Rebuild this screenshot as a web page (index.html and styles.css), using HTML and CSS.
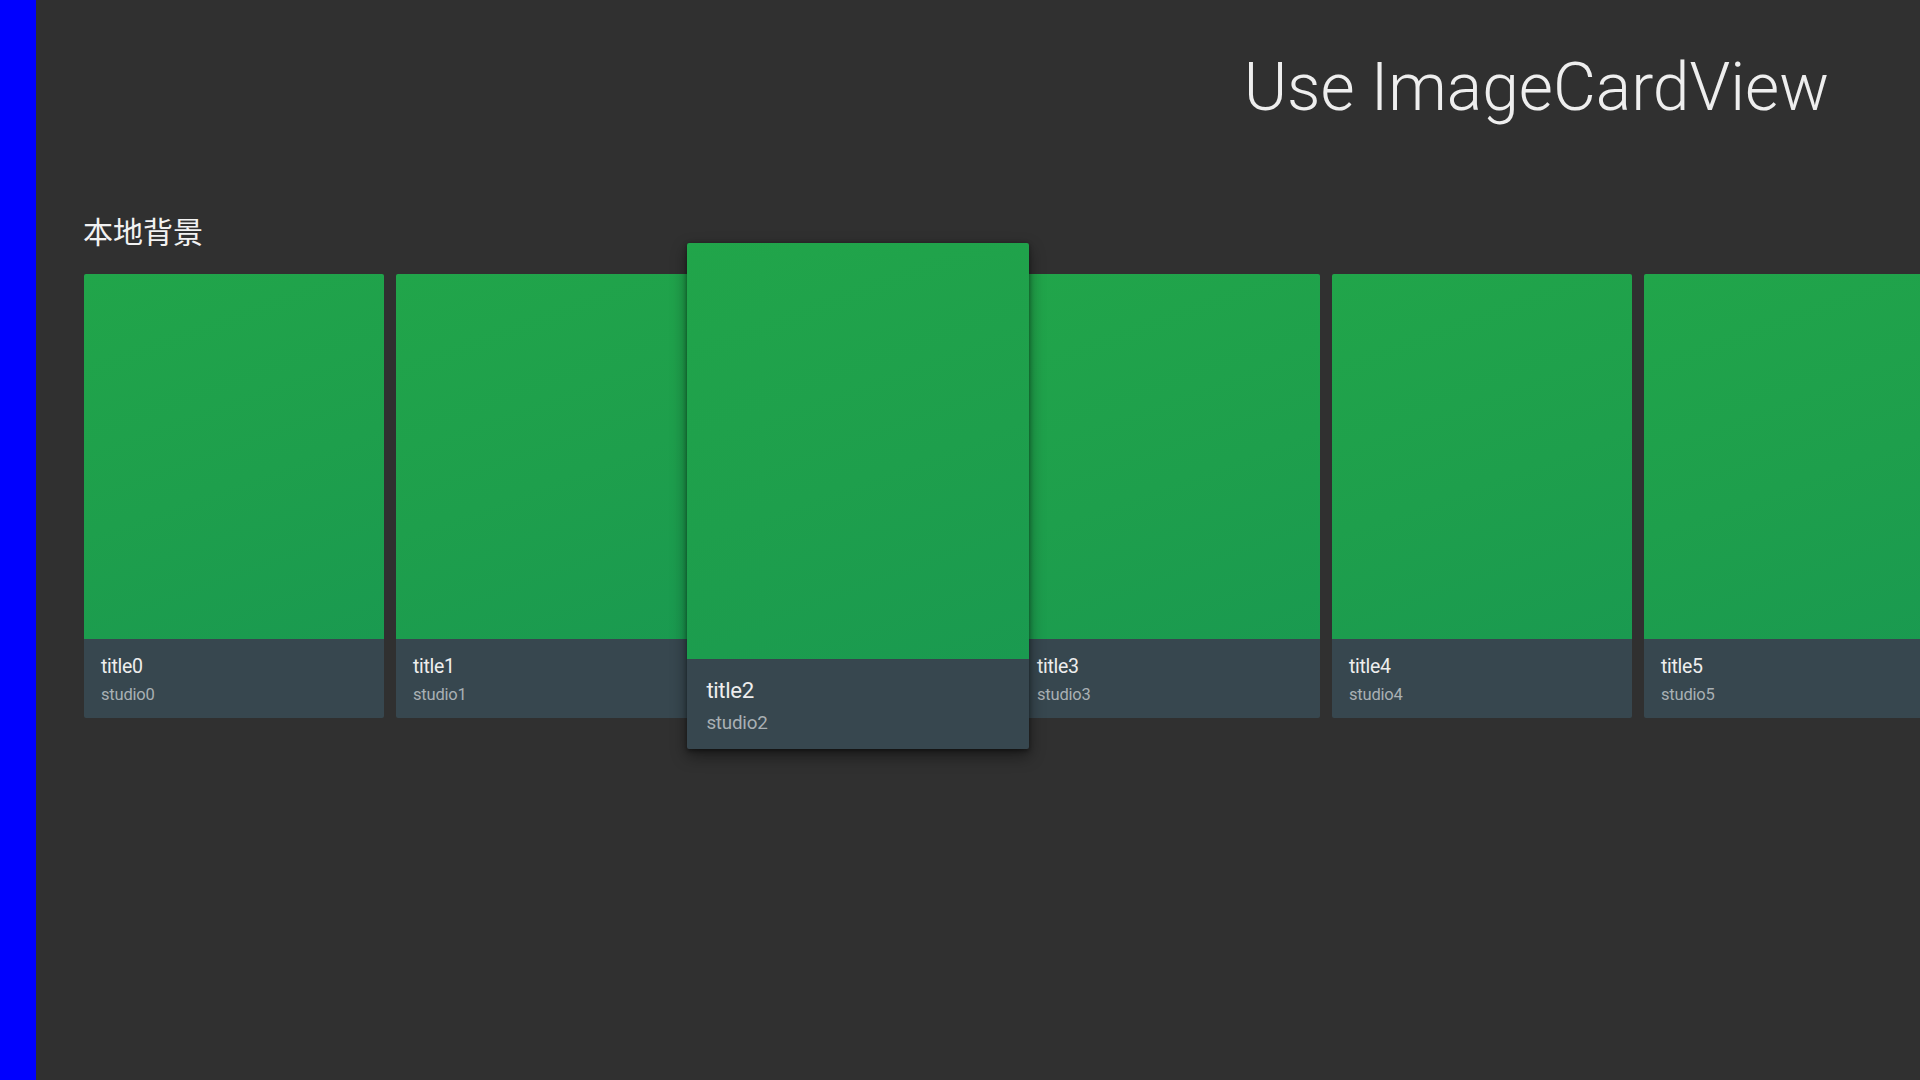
FILE: index.html
```html
<!DOCTYPE html>
<html lang="zh">
<head>
<meta charset="utf-8">
<title>Use ImageCardView</title>
<link rel="stylesheet" href="styles.css">
</head>
<body>
<div class="screen">
  <div class="side-bar"></div>
  <main class="browse">
    <header class="browse-header">
      <h1 class="browse-title">Use ImageCardView</h1>
    </header>
    <section class="row">
      <h2 class="row-header">本地背景</h2>
      <div class="row-cards">
        <div class="card">
          <div class="card-image"></div>
          <div class="card-info"><div class="card-title">title0</div><div class="card-sub">studio0</div></div>
        </div>
        <div class="card">
          <div class="card-image"></div>
          <div class="card-info"><div class="card-title">title1</div><div class="card-sub">studio1</div></div>
        </div>
        <div class="card card-focused">
          <div class="card-image"></div>
          <div class="card-info"><div class="card-title">title2</div><div class="card-sub">studio2</div></div>
        </div>
        <div class="card">
          <div class="card-image"></div>
          <div class="card-info"><div class="card-title">title3</div><div class="card-sub">studio3</div></div>
        </div>
        <div class="card">
          <div class="card-image"></div>
          <div class="card-info"><div class="card-title">title4</div><div class="card-sub">studio4</div></div>
        </div>
        <div class="card">
          <div class="card-image"></div>
          <div class="card-info"><div class="card-title">title5</div><div class="card-sub">studio5</div></div>
        </div>
      </div>
    </section>
  </main>
</div>
</body>
</html>
```
FILE: styles.css
```css
html, body {
  margin: 0;
  padding: 0;
  width: 1920px;
  height: 1080px;
  overflow: hidden;
  background: #303030;
  font-family: Roboto, "Noto Sans CJK SC", sans-serif;
}
.screen {
  display: flex;
  width: 1920px;
  height: 1080px;
}
.side-bar {
  flex: 0 0 36px;
  background: #0000ff;
}
.browse {
  flex: 1;
  min-width: 0;
  overflow: hidden;
}
.browse-header {
  display: flex;
  justify-content: flex-end;
  padding: 49px 91px 0 0;
  height: 120px;
  box-sizing: border-box;
}
.browse-title {
  margin: 0;
  font-weight: 300;
  font-size: 66px;
  line-height: 78px;
  height: 71px;
  color: #eeeeee;
  white-space: nowrap;
}
.row {
  padding-top: 90px;
}
.row-header {
  margin: 0 0 0 47px;
  font-family: "Noto Sans CJK SC", sans-serif;
  font-weight: 400;
  font-size: 30px;
  line-height: 40px;
  height: 64px;
  color: #f2f2f2;
}
.row-cards {
  display: flex;
  gap: 12px;
  padding-left: 48px;
}
.card {
  flex: 0 0 300px;
  height: 444px;
  display: flex;
  flex-direction: column;
  border-radius: 2px;
  overflow: hidden;
}
.card-focused {
  transform: scale(1.14);
  position: relative;
  z-index: 2;
  box-shadow: 0 6px 14px rgba(0, 0, 0, 0.45), 0 1px 4px rgba(0, 0, 0, 0.4);
}
.card-image {
  height: 365px;
  background: linear-gradient(160deg, #21a54a 0%, #1e9f4c 55%, #1a9a50 100%);
}
.card-info {
  flex: 1;
  background: #37474f;
  padding: 16px 17px 0;
}
.card-title {
  font-size: 19.5px;
  line-height: 24px;
  color: #eeeeee;
  letter-spacing: -0.3px;
}
.card-sub {
  margin-top: 6px;
  font-size: 16.5px;
  line-height: 20px;
  color: #a9b0b4;
  letter-spacing: -0.2px;
}
```
